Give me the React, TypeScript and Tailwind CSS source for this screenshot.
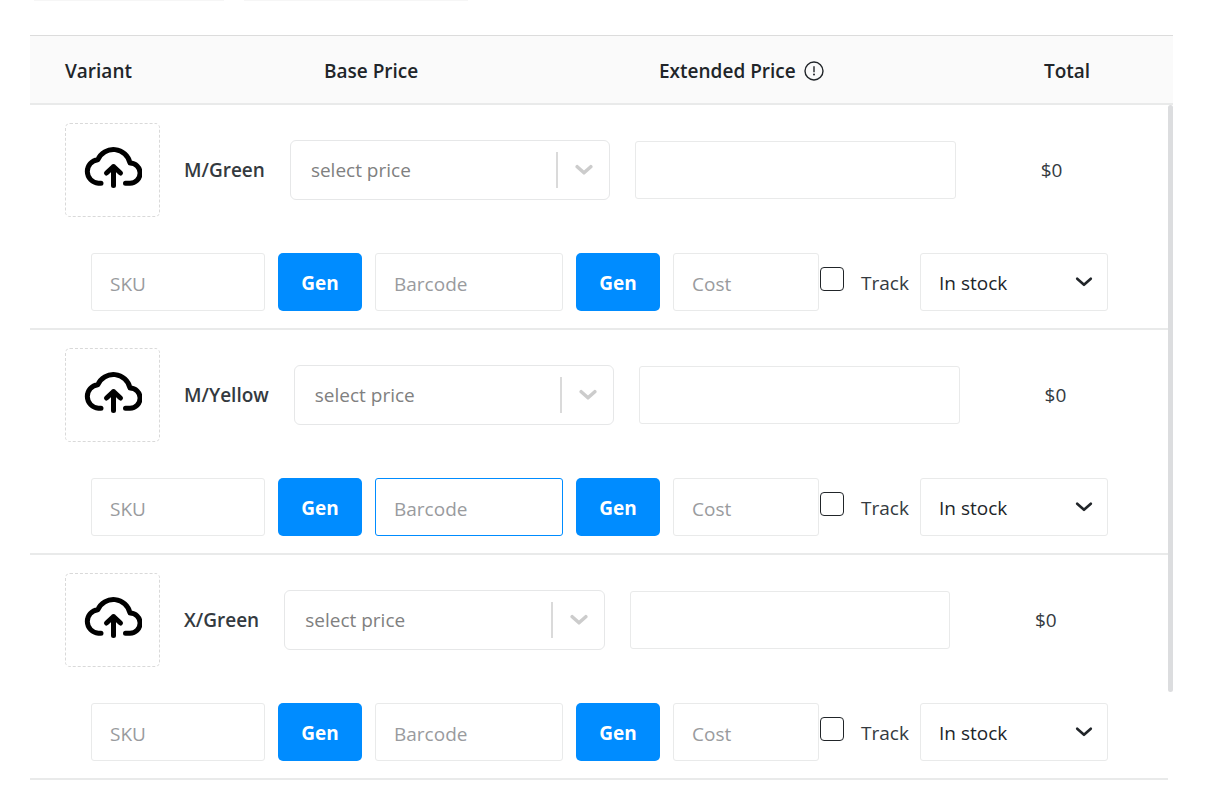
import { useState } from "react"

interface Variant {
  name: string
  total: string
  activeBarcode?: boolean
}

const variants: Variant[] = [
  { name: "M/Green", total: "$0" },
  { name: "M/Yellow", total: "$0", activeBarcode: true },
  { name: "X/Green", total: "$0" },
]

const fieldClass =
  "h-[58px] min-w-0 rounded-[3px] border bg-white px-[18px] pt-1 text-[19px] text-[#212529] outline-none placeholder:text-[#999b9e] focus:border-[#008cff]"

function CloudUploadIcon() {
  return (
    <svg
      width="58"
      height="42"
      viewBox="0 0 58 42"
      fill="none"
      stroke="black"
      strokeWidth="5"
      strokeLinecap="round"
      strokeLinejoin="round"
    >
      <path d="M17 36.2H14.4A11.8 11.8 0 0 1 13.8 12.7A17 17 0 0 1 46 16A10.1 10.1 0 0 1 46 36.2H41.5" />
      <path d="M29.5 38.5V19.5M22.5 26L29.5 19.5L36.5 26" />
    </svg>
  )
}

function InfoIcon() {
  return (
    <svg width="20" height="20" viewBox="0 0 20 20" fill="none" stroke="#212529" strokeWidth="1.4">
      <circle cx="10" cy="10" r="9" />
      <path d="M10 5.2V11.2" />
      <circle cx="10" cy="13.6" r="1" fill="#212529" stroke="none" />
    </svg>
  )
}

function ChevronIcon({ className }: { className: string }) {
  return (
    <svg
      className={className}
      width="18"
      height="12"
      viewBox="0 0 18 12"
      fill="none"
      stroke="currentColor"
      strokeLinecap="round"
      strokeLinejoin="round"
    >
      <path d="M2.2 2.7L9 8.8L15.8 2.7" />
    </svg>
  )
}

function GenButton({ label }: { label: string }) {
  return (
    <button
      type="button"
      aria-label={label}
      className="h-[58px] w-[84px] justify-self-center rounded-[5px] bg-[#008cff] pt-0.5 text-[19px] font-bold text-white hover:bg-[#007de6]"
    >
      Gen
    </button>
  )
}

function VariantRow({ variant }: { variant: Variant }) {
  const [tracked, setTracked] = useState(false)

  return (
    <div className="border-b-2 border-[#e9eaea] pt-[18px] pb-[17px]">
      {/* Image, name and prices */}
      <div className="flex items-center px-[35px]">
        <button
          type="button"
          aria-label={`Upload image for ${variant.name}`}
          className="flex h-[94px] w-[95px] shrink-0 items-center justify-center rounded-[5px] border border-dashed border-[#d9d9d9] pb-1"
        >
          <CloudUploadIcon />
        </button>
        <div className="ml-6 shrink-0 font-semibold text-[#343a40]">{variant.name}</div>
        <div className="relative ml-[25px] w-[30%] shrink-0">
          <select
            aria-label={`Base price for ${variant.name}`}
            defaultValue=""
            className="h-[60px] w-full appearance-none rounded-[6px] border border-[#e6e7e8] bg-white px-5 text-[19px] text-[#808080] outline-none focus:border-[#008cff]"
          >
            <option value="">select price</option>
          </select>
          <div className="pointer-events-none absolute inset-y-0 right-0 flex items-center">
            <span className="h-[36px] w-0.5 bg-[#dadada]" />
            <ChevronIcon className="mx-[17px] stroke-[3.5] text-[#cccccc]" />
          </div>
        </div>
        <input
          type="text"
          aria-label={`Extended price for ${variant.name}`}
          className={`ml-[25px] w-[30%] shrink-0 border-[#e9eaea] ${fieldClass}`}
        />
        <div className="ml-[85px] text-[#343a40]">{variant.total}</div>
      </div>

      {/* Inventory */}
      <div className="mt-[36px] grid grid-cols-[174fr_110px_188fr_110px_146fr_101px_188fr] items-center pr-[60px] pl-[61px]">
        <input
          type="text"
          placeholder="SKU"
          aria-label="SKU"
          className={`border-[#e9eaea] ${fieldClass}`}
        />
        <GenButton label="Generate SKU" />
        <input
          type="text"
          placeholder="Barcode"
          aria-label="Barcode"
          className={`${variant.activeBarcode ? "border-[#008cff]" : "border-[#e9eaea]"} ${fieldClass}`}
        />
        <GenButton label="Generate barcode" />
        <input
          type="text"
          placeholder="Cost"
          aria-label="Cost"
          className={`border-[#e9eaea] ${fieldClass}`}
        />
        <label className="ml-px flex items-center gap-[17px] pt-0.5 text-[#343a40]">
          <input
            type="checkbox"
            checked={tracked}
            onChange={(e) => setTracked(e.target.checked)}
            className="mb-2 h-6 w-6 shrink-0 appearance-none rounded-[4px] border border-[#212529] checked:bg-[#008cff]"
          />
          Track
        </label>
        <div className="relative min-w-0">
          <select
            aria-label="Stock status"
            className="h-[58px] w-full appearance-none rounded-[3px] border border-[#e9eaea] bg-white px-[18px] pt-0.5 text-[19px] text-[#212529] outline-none focus:border-[#008cff]"
          >
            <option>In stock</option>
            <option>Out of stock</option>
          </select>
          <ChevronIcon className="pointer-events-none absolute inset-y-0 right-[15px] my-auto stroke-[2.6] text-[#212529]" />
        </div>
      </div>
    </div>
  )
}

export default function App() {
  return (
    <div className="bg-white pr-[33px] pb-3 pl-[30px] font-['Open_Sans','Noto_Sans',sans-serif] text-[19px] leading-7">
      {/* Bottom edge of the filters above the table */}
      <div className="flex gap-5 pl-1">
        <div className="h-px w-[190px] bg-[#f6f6f6]" />
        <div className="h-px w-[224px] bg-[#f6f6f6]" />
      </div>

      <div className="mt-[34px] grid h-[70px] grid-cols-[259fr_335fr_385fr_129fr] items-center border-t border-b-2 border-t-[#dcdcdc] border-b-[#e9eaea] bg-[#fafafa] pt-0.5 pl-[35px] font-semibold text-[#212529]">
        <div>Variant</div>
        <div>Base Price</div>
        <div className="flex items-center gap-2">
          Extended Price
          <InfoIcon />
        </div>
        <div>Total</div>
      </div>

      <div className="flex">
        <div className="min-w-0 flex-1">
          {variants.map((variant) => (
            <VariantRow key={variant.name} variant={variant} />
          ))}
        </div>
        <div className="w-[5px]">
          <div className="h-[587px] rounded-full bg-[#dcdddf]" />
        </div>
      </div>
    </div>
  )
}
